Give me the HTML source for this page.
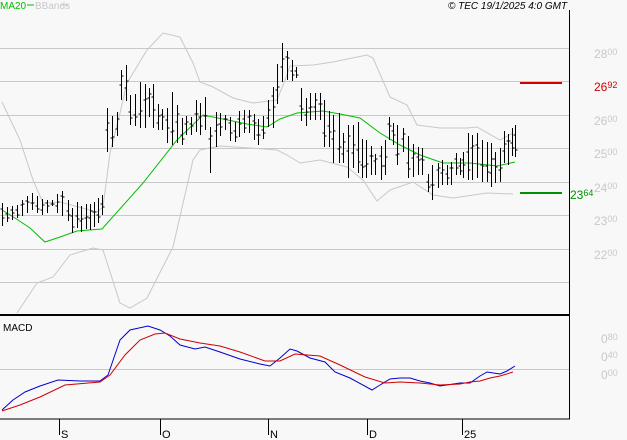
<!DOCTYPE html>
<html><head><meta charset="utf-8"><style>
html,body{margin:0;padding:0;background:#f8f8f8;width:627px;height:440px;overflow:hidden}
svg{display:block}
text{font-family:"Liberation Sans",sans-serif}
</style></head><body>
<svg id="s" width="627" height="440" xmlns="http://www.w3.org/2000/svg">
<rect width="627" height="440" fill="#f8f8f8"/>
<g stroke="#c8c8c8" stroke-width="1">
<line x1="0" y1="48.5" x2="569" y2="48.5"/><line x1="0" y1="81.5" x2="569" y2="81.5"/>
<line x1="0" y1="115.5" x2="569" y2="115.5"/><line x1="0" y1="148.5" x2="569" y2="148.5"/>
<line x1="0" y1="182.5" x2="569" y2="182.5"/><line x1="0" y1="215.5" x2="569" y2="215.5"/>
<line x1="0" y1="249.5" x2="569" y2="249.5"/><line x1="0" y1="282.5" x2="569" y2="282.5"/>
<line x1="0" y1="369.5" x2="569" y2="369.5"/>
</g>
<g fill="none" stroke="#c8c8c8" stroke-width="1">
<polyline points="2,102 20,140 33,180 43,203 60,202 97,212 103,207 110,153 120,113 127,83 147,50 163,33 180,37 193,63 200,82 213,87 233,98 253,103 277,100 287,75 290,66 313,65 333,62 367,55 373,58 390,97 407,105 417,125 440,128 467,128 477,127 500,140 513,133"/>
<polyline points="17,313 37,283 53,277 70,255 93,248 103,250 120,303 130,308 147,298 173,247 193,160 200,150 220,146 250,148 277,150 287,155 300,163 320,160 347,167 363,180 377,201 390,190 413,182 433,195 453,198 487,193 513,194"/>
</g>
<polyline fill="none" stroke="#00c000" stroke-width="1" points="2,210 15,218 30,228 45,242 60,237 77,231 102,229 110,220 143,183 177,140 203,115 223,119 247,124 267,127 280,119 297,113 323,111 340,114 360,118 380,133 400,145 420,155 443,163 470,163 497,166 515,162"/>
<g id="bars" stroke="#000" stroke-width="1"></g>
<line x1="520" y1="83" x2="562" y2="83" stroke="#d00000" stroke-width="2"/>
<line x1="520" y1="193" x2="562" y2="193" stroke="#009000" stroke-width="2"/>
<line x1="569.5" y1="10" x2="569.5" y2="419" stroke="#000" stroke-width="1"/>
<line x1="0" y1="315" x2="569" y2="315" stroke="#000" stroke-width="2"/>
<line x1="0" y1="419" x2="570" y2="419" stroke="#000" stroke-width="1"/>
<g stroke="#000"><line x1="59.5" y1="419" x2="59.5" y2="435"/><line x1="160.5" y1="419" x2="160.5" y2="435"/><line x1="268.5" y1="419" x2="268.5" y2="435"/><line x1="367.5" y1="419" x2="367.5" y2="435"/><line x1="462.5" y1="419" x2="462.5" y2="435"/></g>
<g font-size="11" fill="#000"><text x="61" y="438">S</text><text x="162" y="438">O</text><text x="270" y="438">N</text><text x="369" y="438">D</text><text x="464" y="438">25</text></g>
<polyline fill="none" stroke="#0000d0" stroke-width="1" points="2,410 13,400 25,392 40,386 58,380 80,381 100,381 108,375 120,340 130,330 148,326 160,330 170,336 180,345 195,349 205,347 220,352 240,359 260,364 270,366 280,358 290,349 297,351 310,358 325,362 335,372 350,378 372,390 380,385 390,379 400,378 410,378 420,381 430,383 440,386 460,383 470,383 480,376 487,372 500,374 507,371 515,366"/>
<polyline fill="none" stroke="#d00000" stroke-width="1" points="2,411 20,405 40,397 65,385 100,382 110,375 125,355 140,340 155,334 165,333 180,339 200,343 220,346 240,352 265,361 280,361 295,354 320,356 340,365 365,377 385,383 400,382 420,383 440,385 460,384 470,382 480,381 490,378 500,376 513,372"/>
<text x="3" y="331" font-size="10" fill="#000">MACD</text>
<text x="0" y="9" font-size="10" fill="#00c000">MA20</text><line x1="27" y1="5" x2="34" y2="5" stroke="#00c000"/>
<text x="35" y="9" font-size="10" fill="#c8c8c8">BBands</text><line x1="61" y1="5" x2="68" y2="5" stroke="#c8c8c8"/>
<text x="448" y="9" font-size="10" font-style="italic" fill="#000">© TEC 19/1/2025 4:0 GMT</text>
<g fill="#c8c8c8" font-size="12">
<text x="594" y="58">28<tspan font-size="9" dy="-3">00</tspan></text>
<text x="594" y="125">26<tspan font-size="9" dy="-3">00</tspan></text>
<text x="594" y="158">25<tspan font-size="9" dy="-3">00</tspan></text>
<text x="594" y="192">24<tspan font-size="9" dy="-3">00</tspan></text>
<text x="594" y="225">23<tspan font-size="9" dy="-3">00</tspan></text>
<text x="594" y="259">22<tspan font-size="9" dy="-3">00</tspan></text>
<text x="601" y="343">0<tspan font-size="9" dy="-3">80</tspan></text>
<text x="601" y="361">0<tspan font-size="9" dy="-3">40</tspan></text>
<text x="601" y="379">0<tspan font-size="9" dy="-3">00</tspan></text>
</g>
<text x="594" y="91" font-size="12" fill="#d00000">26<tspan font-size="9" dy="-3">92</tspan></text>
<text x="570" y="199" font-size="12" fill="#009000">23<tspan font-size="9" dy="-3">64</tspan></text>
</svg>
<script>
var b=[[2,203,226],[7,207,222],[12,206,220],[17,205,218],[22,200,216],[27,196,213],[32,193,210],[37,196,213],[42,199,215],[47,200,213],[52,200,206],[57,194,213],[62,191,216],[68,200,221],[72,208,233],[77,202,228],[81,206,232],[86,204,229],[90,204,230],[94,202,227],[98,198,223],[102,195,215],[107,108,152],[112,116,147],[117,112,136],[121,70,100],[126,65,101],[130,95,125],[135,94,126],[140,82,128],[145,84,128],[149,88,117],[153,84,128],[158,104,130],[162,109,130],[167,108,143],[172,92,145],[177,105,143],[182,118,145],[186,116,135],[191,117,135],[196,100,132],[200,103,135],[205,97,130],[210,127,173],[216,112,147],[220,113,136],[225,115,130],[230,117,141],[235,122,142],[239,111,137],[244,110,133],[249,110,133],[254,114,140],[258,119,145],[263,116,139],[268,100,127],[273,87,128],[277,64,104],[282,43,82],[287,51,80],[292,60,81],[296,67,78],[301,88,121],[306,98,126],[310,93,120],[315,93,120],[320,93,120],[324,100,147],[329,111,147],[333,115,163],[339,113,163],[343,133,163],[348,125,178],[353,125,168],[358,122,173],[362,139,178],[366,140,178],[371,146,175],[375,154,175],[381,146,180],[385,140,175],[389,117,140],[393,123,145],[397,125,165],[403,128,152],[408,136,178],[413,144,177],[418,147,175],[422,148,175],[428,174,192],[432,165,200],[438,163,188],[442,160,185],[447,165,185],[451,162,185],[456,153,175],[460,158,175],[463,152,178],[468,133,180],[472,135,180],[477,133,178],[482,140,182],[487,142,182],[491,143,187],[495,152,183],[500,148,182],[504,131,163],[508,134,165],[512,128,156],[515,125,157]];
var g=document.getElementById('bars'),h='',s=7;
b.forEach(function(a){var x=a[0]+0.5;s=(s*37+11)%97;var c=a[1]+(a[2]-a[1])*(0.2+0.6*s/97);s=(s*37+11)%97;var o=a[1]+(a[2]-a[1])*(0.2+0.6*s/97);
h+='<line x1="'+x+'" y1="'+a[1]+'" x2="'+x+'" y2="'+a[2]+'"/><line x1="'+x+'" y1="'+c.toFixed(0)+'" x2="'+(x+2)+'" y2="'+c.toFixed(0)+'"/><line x1="'+(x-2)+'" y1="'+o.toFixed(0)+'" x2="'+x+'" y2="'+o.toFixed(0)+'"/>';});
g.innerHTML=h;
</script>
</body></html>
